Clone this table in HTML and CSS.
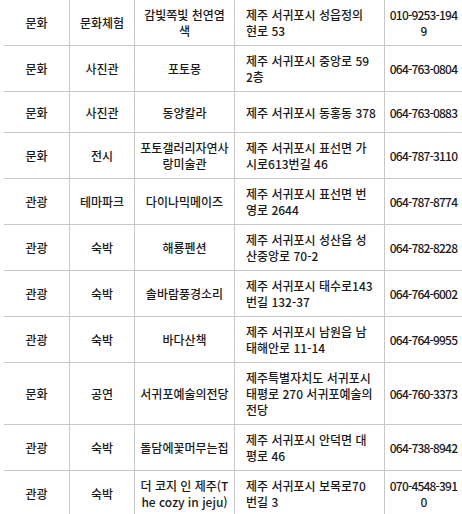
FILE: index.html
```html
<!DOCTYPE html>
<html lang="ko">
<head>
<meta charset="utf-8">
<title>서귀포 관광 문화 시설</title>
<link rel="stylesheet" href="styles.css">
</head>
<body>
<div class="wrap">
<table class="tbl">
<colgroup>
<col class="w1"><col class="w2"><col class="w3"><col class="w4"><col class="w5">
</colgroup>
<tbody>
<tr><td>문화</td><td>문화체험</td><td class="name">감빛쪽빛 천연염<br>색</td><td class="addr">제주 서귀포시 성읍정의<br>현로 53</td><td class="tel">010-9253-194<br>9</td></tr>
<tr><td>문화</td><td>사진관</td><td class="name">포토몽</td><td class="addr">제주 서귀포시 중앙로 59<br>2층</td><td class="tel">064-763-0804</td></tr>
<tr><td>문화</td><td>사진관</td><td class="name">동양칼라</td><td class="addr">제주 서귀포시 동홍동 378</td><td class="tel">064-763-0883</td></tr>
<tr><td>문화</td><td>전시</td><td class="name">포토갤러리자연사<br>랑미술관</td><td class="addr">제주 서귀포시 표선면 가<br>시로613번길 46</td><td class="tel">064-787-3110</td></tr>
<tr><td>관광</td><td>테마파크</td><td class="name">다이나믹메이즈</td><td class="addr">제주 서귀포시 표선면 번<br>영로 2644</td><td class="tel">064-787-8774</td></tr>
<tr><td>관광</td><td>숙박</td><td class="name">해룡펜션</td><td class="addr">제주 서귀포시 성산읍 성<br>산중앙로 70-2</td><td class="tel">064-782-8228</td></tr>
<tr><td>관광</td><td>숙박</td><td class="name">솔바람풍경소리</td><td class="addr">제주 서귀포시 태수로143<br>번길 132-37</td><td class="tel">064-764-6002</td></tr>
<tr><td>관광</td><td>숙박</td><td class="name">바다산책</td><td class="addr">제주 서귀포시 남원읍 남<br>태해안로 11-14</td><td class="tel">064-764-9955</td></tr>
<tr><td>문화</td><td>공연</td><td class="name">서귀포예술의전당</td><td class="addr">제주특별자치도 서귀포시<br>태평로 270 서귀포예술의<br>전당</td><td class="tel">064-760-3373</td></tr>
<tr><td>관광</td><td>숙박</td><td class="name">돌담에꽃머무는집</td><td class="addr">제주 서귀포시 안덕면 대<br>평로 46</td><td class="tel">064-738-8942</td></tr>
<tr><td>관광</td><td>숙박</td><td class="name">더 코지 인 제주(T<br>he cozy in jeju)</td><td class="addr">제주 서귀포시 보목로70<br>번길 3</td><td class="tel">070-4548-391<br>0</td></tr>
</tbody>
</table>
</div>
</body>
</html>
```

FILE: styles.css
```css
html, body {
  margin: 0;
  padding: 0;
  background: #ffffff;
  overflow: hidden;
}

.wrap {
  padding-left: 4px;
}

.tbl {
  table-layout: fixed;
  width: 458px;
  border-collapse: separate;
  border-spacing: 0;
  font-family: "Noto Sans CJK KR", sans-serif;
  font-size: 12px;
  font-weight: 500;
  line-height: 16px;
  color: #1a1a1a;
}

.w1 { width: 66px; }
.w2 { width: 65px; }
.w3 { width: 100px; }
.w4 { width: 150px; }
.w5 { width: 77px; }

.tbl tr {
  height: 41px;
}

.tbl td {
  box-sizing: border-box;
  padding: 7px 1px 6px 1px;
  border-right: 1px solid #c8c8c8;
  border-bottom: 1px solid #c8c8c8;
  text-align: center;
  vertical-align: middle;
  white-space: nowrap;
}

.tbl td.addr {
  text-align: left;
  padding-left: 11px;
  padding-right: 1px;
}

.tbl td.tel {
  border-right: none;
  padding-left: 3px;
  padding-right: 3px;
  letter-spacing: -0.8px;
}
```
